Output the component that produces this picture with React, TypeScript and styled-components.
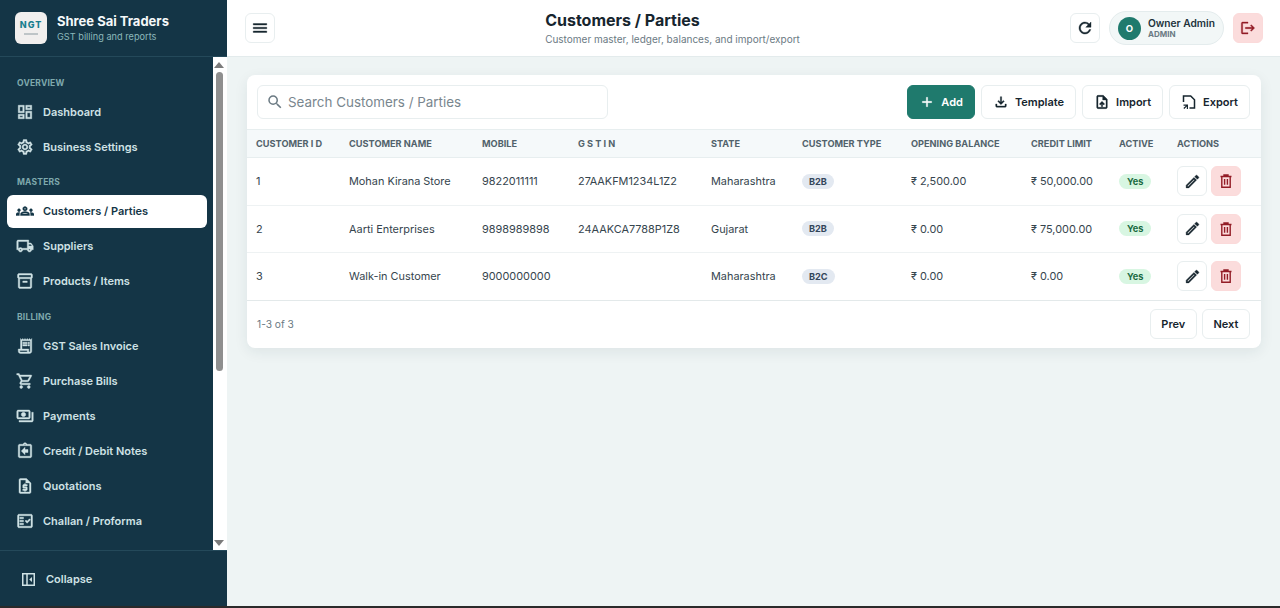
import React from "react";
import styled, { createGlobalStyle } from "styled-components";
import {
  MdAdd,
  MdLogout,
  MdMenu,
  MdOutlineAssignmentReturn,
  MdOutlineDashboard,
  MdOutlineEdit,
  MdOutlineFactCheck,
  MdOutlineFileDownload,
  MdOutlineGroups,
  MdOutlineInventory2,
  MdOutlineLocalShipping,
  MdOutlinePayments,
  MdOutlineReceiptLong,
  MdOutlineRequestQuote,
  MdOutlineSettings,
  MdOutlineShoppingCart,
  MdOutlineUploadFile,
  MdRefresh,
  MdSearch,
} from "react-icons/md";

const GlobalStyle = createGlobalStyle`
  html, body { margin: 0; padding: 0; height: 100%; overflow: hidden; }
  body { font-family: Inter, "Noto Sans", sans-serif; background: #eef4f4; color: #16252e; }
  * { box-sizing: border-box; }
  svg path[fill="none"] { stroke: none; }
`;

const Shell = styled.div`
  display: flex;
  flex-direction: column;
  width: 1280px;
  height: 608px;
`;

const Body = styled.div`
  display: flex;
  flex: 1;
  min-height: 0;
`;

const BottomEdge = styled.div`
  height: 2px;
  background: #2a2a2a;
`;

const Sidebar = styled.aside`
  width: 227px;
  flex-shrink: 0;
  display: flex;
  flex-direction: column;
  background: #143546;
`;

const Brand = styled.div`
  height: 57px;
  flex-shrink: 0;
  display: flex;
  align-items: center;
  gap: 10px;
  padding: 0 15px;
  border-bottom: 1px solid #24495a;
`;

const LogoBox = styled.div`
  width: 32px;
  height: 32px;
  border-radius: 6px;
  background: #f1efee;
  display: flex;
  flex-direction: column;
  align-items: center;
  justify-content: center;
`;

const LogoText = styled.span`
  font-size: 9px;
  line-height: 9px;
  font-weight: 800;
  letter-spacing: 1px;
  color: #1a7f8f;
`;

const LogoSwoosh = styled.svg`
  width: 26px;
  height: 7px;
`;

const BrandName = styled.div`
  font-size: 13px;
  line-height: 16px;
  font-weight: 700;
  color: #f4f8f9;
  white-space: nowrap;
`;

const BrandSub = styled.div`
  font-size: 9.2px;
  line-height: 14px;
  margin-top: 1px;
  color: #8cb8bb;
`;

const NavArea = styled.div`
  flex: 1;
  min-height: 0;
  display: flex;
`;

const Nav = styled.nav`
  flex: 1;
  min-width: 0;
  padding: 8.6px 6px 0 7px;
  overflow: hidden;
`;

const ScrollRail = styled.div`
  width: 14px;
  flex-shrink: 0;
  display: flex;
  flex-direction: column;
  align-items: center;
  background: #ffffff;
  padding: 5px 2px 4px 0;
`;

const RailArrow = styled.div<{ $down?: boolean }>`
  width: 0;
  height: 0;
  flex-shrink: 0;
  border-left: 5px solid transparent;
  border-right: 5px solid transparent;
  ${(p) => (p.$down ? "border-top: 6px solid #7b7b7b;" : "border-bottom: 6px solid #7b7b7b;")}
`;

const RailThumb = styled.div`
  width: 7px;
  height: 299px;
  margin-top: 4px;
  border-radius: 4px;
  background: #8f8f8f;
`;

const RailSpacer = styled.div`
  flex: 1;
`;

const SectionLabel = styled.div`
  height: 29.5px;
  padding: 11px 10px 0;
  font-size: 8.5px;
  line-height: 12px;
  font-weight: 700;
  letter-spacing: 0.2px;
  color: #7fa9ad;
`;

const NavItem = styled.div<{ $active?: boolean }>`
  height: 33px;
  margin-bottom: 2px;
  display: flex;
  align-items: center;
  gap: 9px;
  padding: 0 9px;
  border-radius: 6px;
  font-size: 11px;
  font-weight: 600;
  background: ${(p) => (p.$active ? "#ffffff" : "transparent")};
  color: ${(p) => (p.$active ? "#143546" : "#cfe2e5")};

  svg {
    width: 18px;
    height: 18px;
    flex-shrink: 0;
    stroke-width: 0.5;
  }
`;

const CollapseBar = styled.div`
  height: 56px;
  flex-shrink: 0;
  display: flex;
  align-items: center;
  gap: 11px;
  padding: 1px 22px 0;
  border-top: 1px solid #24495a;
  font-size: 11px;
  font-weight: 600;
  color: #cfe2e5;
`;

const Main = styled.main`
  flex: 1;
  min-width: 0;
  display: flex;
  flex-direction: column;
`;

const Topbar = styled.header`
  height: 57px;
  flex-shrink: 0;
  display: flex;
  align-items: center;
  justify-content: space-between;
  padding: 0 17px 0 18px;
  background: #ffffff;
  border-bottom: 1px solid #e3ebec;
`;

const IconButton = styled.button<{ $danger?: boolean }>`
  width: 30px;
  height: 30px;
  padding: 0;
  flex-shrink: 0;
  display: flex;
  align-items: center;
  justify-content: center;
  border-radius: 6px;
  border: 1px solid ${(p) => (p.$danger ? "#fbdada" : "#e8eeef")};
  background: ${(p) => (p.$danger ? "#fbdcdc" : "#ffffff")};
  color: ${(p) => (p.$danger ? "#931c26" : "#16252e")};

  svg { stroke-width: 0.5; }
`;

const TitleBlock = styled.div`
  display: flex;
  flex-direction: column;
`;

const PageTitle = styled.h1`
  margin: 0;
  font-size: 16px;
  line-height: 20px;
  font-weight: 700;
  color: #16252e;
`;

const PageSub = styled.p`
  margin: 2px 0 0;
  font-size: 10px;
  line-height: 14px;
  color: #6b7a83;
`;

const TopActions = styled.div`
  display: flex;
  align-items: center;
  gap: 9px;
`;

const UserPill = styled.div`
  width: 115px;
  height: 34px;
  display: flex;
  align-items: center;
  gap: 7px;
  padding: 0 8px;
  border-radius: 17px;
  background: #f2f7f7;
  border: 1px solid #e4eced;
`;

const Avatar = styled.div`
  width: 23px;
  height: 23px;
  flex-shrink: 0;
  border-radius: 50%;
  background: #1f7a6d;
  color: #ffffff;
  font-size: 9.5px;
  font-weight: 700;
  display: flex;
  align-items: center;
  justify-content: center;
`;

const UserName = styled.div`
  font-size: 10.2px;
  line-height: 12px;
  font-weight: 600;
  white-space: nowrap;
  color: #22323b;
`;

const UserRole = styled.div`
  font-size: 8px;
  line-height: 10px;
  font-weight: 700;
  color: #6b7a83;
`;

const Content = styled.div`
  padding: 18px 19px 0 20px;
`;

const Card = styled.section`
  background: #ffffff;
  border-radius: 8px;
  box-shadow: 0 4px 14px rgba(20, 53, 70, 0.08);
`;

const Toolbar = styled.div`
  height: 54px;
  display: flex;
  align-items: center;
  justify-content: space-between;
  padding: 0 11px 0 10px;
`;

const SearchBox = styled.div`
  width: 351px;
  height: 34px;
  display: flex;
  align-items: center;
  gap: 4px;
  padding: 0 8px;
  border: 1px solid #e8eeef;
  border-radius: 6px;
  color: #6b7a83;
`;

const SearchInput = styled.input`
  flex: 1;
  min-width: 0;
  border: 0;
  outline: none;
  padding: 0;
  font: 400 13.4px Inter, sans-serif;

  &::placeholder { color: #79868e; opacity: 1; }
`;

const ToolActions = styled.div`
  display: flex;
  gap: 6px;
`;

const ToolButton = styled.button<{ $primary?: boolean }>`
  height: 34px;
  display: flex;
  align-items: center;
  gap: 6px;
  padding: 0 11px 0 11px;
  border-radius: 6px;
  border: 1px solid ${(p) => (p.$primary ? "#1f7a6d" : "#e8eeef")};
  background: ${(p) => (p.$primary ? "#1f7a6d" : "#ffffff")};
  color: ${(p) => (p.$primary ? "#ffffff" : "#16252e")};
  font: 600 11px Inter, sans-serif;

  svg { width: 16px; height: 16px; flex-shrink: 0; stroke-width: 0.5; }
`;

const Table = styled.table`
  width: 100%;
  table-layout: fixed;
  border-collapse: collapse;
`;

const HeadCell = styled.th`
  height: 28px;
  padding: 0 0 0 9px;
  text-align: left;
  font-size: 9.2px;
  font-weight: 700;
  white-space: nowrap;
  color: #51626b;
  background: #f5f9fa;
  border-top: 1px solid #e7eeef;
  border-bottom: 1px solid #e7eeef;
`;

const Cell = styled.td`
  height: 47.5px;
  padding: 0 0 0 9px;
  font-size: 10.9px;
  white-space: nowrap;
  color: #36454e;
  border-bottom: 1px solid #eef2f3;
`;

const TypeBadge = styled.span`
  display: inline-block;
  padding: 0 7px;
  line-height: 15px;
  border-radius: 8px;
  font-size: 9.2px;
  font-weight: 700;
  color: #33465a;
  background: #e3e9f1;
`;

const ActiveBadge = styled.span`
  display: inline-block;
  padding: 0 8px;
  line-height: 15px;
  border-radius: 8px;
  font-size: 9.2px;
  font-weight: 700;
  color: #1c6b43;
  background: #d8f6e2;
`;

const RowActions = styled.div`
  display: flex;
  gap: 4px;
`;

const Pager = styled.div`
  height: 48px;
  display: flex;
  align-items: center;
  justify-content: space-between;
  padding: 0 11px 0 10px;
  border-top: 1px solid #e3e9ea;
  margin-top: -1px;
`;

const PagerText = styled.span`
  font-size: 10.2px;
  color: #6b7a83;
`;

const PagerButtons = styled.div`
  display: flex;
  gap: 5px;
`;

const PagerButton = styled.button`
  height: 30px;
  padding: 0 10.6px;
  border-radius: 6px;
  border: 1px solid #e8eeef;
  background: #ffffff;
  color: #16252e;
  font: 600 11px Inter, sans-serif;
`;

const CollapseIcon = () => (
  <svg width="13" height="13" viewBox="0 0 13 13" fill="none">
    <rect x="0.75" y="0.75" width="11.5" height="11.5" stroke="currentColor" strokeWidth="1.5" />
    <path d="M5 1v11" stroke="currentColor" strokeWidth="1.5" />
    <path d="M10 4v5L7.2 6.5z" fill="currentColor" />
  </svg>
);

const ExportIcon = () => (
  <svg viewBox="0 0 16 16" fill="none">
    <path d="M2.5 8V2h7.2l3.8 3.8V14H8.5" stroke="currentColor" strokeWidth="1.5" />
    <path d="M2.5 10.5H7V15H5.8v-2.4L3.3 15l-.9-.9 2.5-2.4H2.5z" fill="currentColor" />
  </svg>
);

const TrashIcon = () => (
  <svg width="16" height="16" viewBox="0 0 16 16" fill="none">
    <path d="M2.5 3.5h11M6 3.5V2h4v1.5" stroke="currentColor" strokeWidth="1.4" />
    <path d="M3.8 3.5v10.7h8.4V3.5" stroke="currentColor" strokeWidth="1.4" />
    <path d="M6.6 6v5.8M9.4 6v5.8" stroke="currentColor" strokeWidth="1.4" />
  </svg>
);

type NavEntry = { label: string; icon: React.ReactNode; active?: boolean };

const navGroups: { title: string; items: NavEntry[] }[] = [
  {
    title: "OVERVIEW",
    items: [
      { label: "Dashboard", icon: <MdOutlineDashboard /> },
      { label: "Business Settings", icon: <MdOutlineSettings /> },
    ],
  },
  {
    title: "MASTERS",
    items: [
      { label: "Customers / Parties", icon: <MdOutlineGroups />, active: true },
      { label: "Suppliers", icon: <MdOutlineLocalShipping /> },
      { label: "Products / Items", icon: <MdOutlineInventory2 /> },
    ],
  },
  {
    title: "BILLING",
    items: [
      { label: "GST Sales Invoice", icon: <MdOutlineReceiptLong /> },
      { label: "Purchase Bills", icon: <MdOutlineShoppingCart /> },
      { label: "Payments", icon: <MdOutlinePayments /> },
      { label: "Credit / Debit Notes", icon: <MdOutlineAssignmentReturn /> },
      { label: "Quotations", icon: <MdOutlineRequestQuote /> },
      { label: "Challan / Proforma", icon: <MdOutlineFactCheck /> },
    ],
  },
];

const columns = [
  { label: "CUSTOMER I D", width: 93 },
  { label: "CUSTOMER NAME", width: 133 },
  { label: "MOBILE", width: 96 },
  { label: "G S T I N", width: 133 },
  { label: "STATE", width: 91 },
  { label: "CUSTOMER TYPE", width: 109 },
  { label: "OPENING BALANCE", width: 120 },
  { label: "CREDIT LIMIT", width: 88 },
  { label: "ACTIVE", width: 58 },
  { label: "ACTIONS", width: 93 },
];

const customers = [
  { id: 1, name: "Mohan Kirana Store", mobile: "9822011111", gstin: "27AAKFM1234L1Z2", state: "Maharashtra", type: "B2B", opening: "₹ 2,500.00", credit: "₹ 50,000.00" },
  { id: 2, name: "Aarti Enterprises", mobile: "9898989898", gstin: "24AAKCA7788P1Z8", state: "Gujarat", type: "B2B", opening: "₹ 0.00", credit: "₹ 75,000.00" },
  { id: 3, name: "Walk-in Customer", mobile: "9000000000", gstin: "", state: "Maharashtra", type: "B2C", opening: "₹ 0.00", credit: "₹ 0.00" },
];

const App = () => {
  return (
    <>
      <GlobalStyle />
      <Shell>
        <Body>
          <Sidebar>
            <Brand>
              <LogoBox>
                <LogoText>NGT</LogoText>
                <LogoSwoosh viewBox="0 0 26 7">
                  <path d="M2 0c6 3 15 3 22 0" stroke="#2a9d8f" strokeWidth="1" fill="none" />
                  <path d="M6 5h14" stroke="#8b9aa0" strokeWidth="1" />
                </LogoSwoosh>
              </LogoBox>
              <div>
                <BrandName>Shree Sai Traders</BrandName>
                <BrandSub>GST billing and reports</BrandSub>
              </div>
            </Brand>
            <NavArea>
              <Nav>
                {navGroups.map((group) => (
                  <div key={group.title}>
                    <SectionLabel>{group.title}</SectionLabel>
                    {group.items.map((item) => (
                      <NavItem key={item.label} $active={item.active}>
                        {item.icon}
                        {item.label}
                      </NavItem>
                    ))}
                  </div>
                ))}
              </Nav>
              <ScrollRail>
                <RailArrow />
                <RailThumb />
                <RailSpacer />
                <RailArrow $down />
              </ScrollRail>
            </NavArea>
            <CollapseBar>
              <CollapseIcon />
              Collapse
            </CollapseBar>
          </Sidebar>
          <Main>
            <Topbar>
              <IconButton>
                <MdMenu size={18} />
              </IconButton>
              <TitleBlock>
                <PageTitle>Customers / Parties</PageTitle>
                <PageSub>Customer master, ledger, balances, and import/export</PageSub>
              </TitleBlock>
              <TopActions>
                <IconButton>
                  <MdRefresh size={18} />
                </IconButton>
                <UserPill>
                  <Avatar>O</Avatar>
                  <div>
                    <UserName>Owner Admin</UserName>
                    <UserRole>ADMIN</UserRole>
                  </div>
                </UserPill>
                <IconButton $danger>
                  <MdLogout size={16} />
                </IconButton>
              </TopActions>
            </Topbar>
            <Content>
              <Card>
                <Toolbar>
                  <SearchBox>
                    <MdSearch size={18} />
                    <SearchInput placeholder="Search Customers / Parties" />
                  </SearchBox>
                  <ToolActions>
                    <ToolButton $primary>
                      <MdAdd />
                      Add
                    </ToolButton>
                    <ToolButton>
                      <MdOutlineFileDownload />
                      Template
                    </ToolButton>
                    <ToolButton>
                      <MdOutlineUploadFile />
                      Import
                    </ToolButton>
                    <ToolButton>
                      <ExportIcon />
                      Export
                    </ToolButton>
                  </ToolActions>
                </Toolbar>
                <Table>
                  <colgroup>
                    {columns.map((c) => (
                      <col key={c.label} width={c.width} />
                    ))}
                  </colgroup>
                  <thead>
                    <tr>
                      {columns.map((c) => (
                        <HeadCell key={c.label}>{c.label}</HeadCell>
                      ))}
                    </tr>
                  </thead>
                  <tbody>
                    {customers.map((row) => (
                      <tr key={row.id}>
                        <Cell>{row.id}</Cell>
                        <Cell>{row.name}</Cell>
                        <Cell>{row.mobile}</Cell>
                        <Cell>{row.gstin}</Cell>
                        <Cell>{row.state}</Cell>
                        <Cell>
                          <TypeBadge>{row.type}</TypeBadge>
                        </Cell>
                        <Cell>{row.opening}</Cell>
                        <Cell>{row.credit}</Cell>
                        <Cell>
                          <ActiveBadge>Yes</ActiveBadge>
                        </Cell>
                        <Cell>
                          <RowActions>
                            <IconButton>
                              <MdOutlineEdit size={17} />
                            </IconButton>
                            <IconButton $danger>
                              <TrashIcon />
                            </IconButton>
                          </RowActions>
                        </Cell>
                      </tr>
                    ))}
                  </tbody>
                </Table>
                <Pager>
                  <PagerText>1-3 of 3</PagerText>
                  <PagerButtons>
                    <PagerButton>Prev</PagerButton>
                    <PagerButton>Next</PagerButton>
                  </PagerButtons>
                </Pager>
              </Card>
            </Content>
          </Main>
        </Body>
        <BottomEdge />
      </Shell>
    </>
  );
};

export default App;
